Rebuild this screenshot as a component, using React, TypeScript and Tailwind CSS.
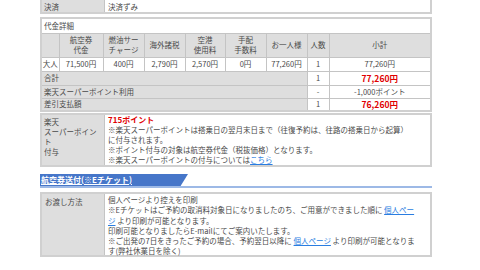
import React from "react";

const cellBase = "border border-[#c4c4c4] text-center leading-[10px] whitespace-nowrap";
const cell = cellBase + " px-[2px]";
const gray = "bg-[#dedede]";

const FareTable = () => {
  return (
    <table className="w-[392px] table-fixed border-collapse border-2 border-[#d0d0d0]">
      <colgroup>
        <col className="w-[18px]" />
        <col className="w-[44px]" />
        <col className="w-[41px]" />
        <col className="w-[41px]" />
        <col className="w-[40px]" />
        <col className="w-[41px]" />
        <col className="w-[41px]" />
        <col className="w-[22px]" />
        <col />
      </colgroup>
      <tbody>
        <tr className="h-[15px]">
          <td colSpan={9} className={cell + " text-left"}>
            代金詳細
          </td>
        </tr>
        <tr className={"h-[24px] " + gray}>
          <td className={cell}></td>
          <td className={cell}>
            航空券
            <br />
            代金
          </td>
          <td className={cell}>
            燃油サー
            <br />
            チャージ
          </td>
          <td className={cell}>海外諸税</td>
          <td className={cell}>
            空港
            <br />
            使用料
          </td>
          <td className={cell}>
            手配
            <br />
            手数料
          </td>
          <td className={cell}>お一人様</td>
          <td className={cell}>人数</td>
          <td className={cell}>小計</td>
        </tr>
        <tr className="h-[14px]">
          <td className={cellBase + " px-0 overflow-hidden"}>大人</td>
          <td className={cell}>71,500円</td>
          <td className={cell}>400円</td>
          <td className={cell}>2,790円</td>
          <td className={cell}>2,570円</td>
          <td className={cell}>0円</td>
          <td className={cell}>77,260円</td>
          <td className={cell}>1</td>
          <td className={cell}>77,260円</td>
        </tr>
        <tr className="h-[14px]">
          <td colSpan={7} className={cell + " text-left " + gray}>
            合計
          </td>
          <td className={cell}>1</td>
          <td className={cell + " font-bold text-[8.5px] text-[#e00000]"}>77,260円</td>
        </tr>
        <tr className="h-[13px]">
          <td colSpan={7} className={cell + " text-left " + gray}>
            楽天スーパーポイント利用
          </td>
          <td className={cell}>-</td>
          <td className={cell}>-1,000ポイント</td>
        </tr>
        <tr className="h-[13px]">
          <td colSpan={7} className={cell + " text-left " + gray}>
            差引支払額
          </td>
          <td className={cell}>1</td>
          <td className={cell + " font-bold text-[8.5px] text-[#e00000]"}>76,260円</td>
        </tr>
      </tbody>
    </table>
  );
};

const Link = ({ children }: { children: React.ReactNode }) => (
  <span className="text-[#2a7de1] underline">{children}</span>
);

export default function App() {
  return (
    <div className="w-[480px] h-[270px] overflow-hidden bg-white text-[#4a4a4a] text-[7.5px] font-['Noto_Sans_CJK_JP',sans-serif]">
      <div className="ml-[40px] w-[392px] -mt-[3px] flex flex-col">
        {/* 決済 */}
        <div className="flex h-[17px] border-2 border-[#d0d0d0]">
          <div className="w-[63px] bg-[#dedede] border-r border-[#c4c4c4] px-[2px] flex items-center pt-[2px]">
            決済
          </div>
          <div className="flex-1 px-[3px] flex items-center pt-[2px]">決済ずみ</div>
        </div>

        <div className="mt-[3px]">
          <FareTable />
        </div>

        {/* ポイント */}
        <div className="mt-[1px] flex border-2 border-[#d0d0d0] h-[54px]">
          <div className="w-[63px] bg-[#dedede] border-r border-[#c4c4c4] px-[2px] pt-[2px] leading-[10px]">
            楽天
            <br />
            スーパーポイン
            <br />
            ト
            <br />
            付与
          </div>
          <div className="flex-1 px-[3px] leading-[10px]">
            <div className="text-[#e00000] font-bold text-[8px] leading-[10px]">715ポイント</div>
            <div>※楽天スーパーポイントは搭乗日の翌月末日まで（往復予約は、往路の搭乗日から起算）</div>
            <div>に付与されます。</div>
            <div>※ポイント付与の対象は航空券代金（税抜価格）となります。</div>
            <div>
              ※楽天スーパーポイントの付与については<Link>こちら</Link>
            </div>
          </div>
        </div>

        {/* 見出し */}
        <div className="mt-[7px] h-[14px] flex items-end border-b-2 border-[#9db9e6]">
          <div className="h-[12px] w-[148px] bg-[#4676c9] [clip-path:polygon(0_0,100%_0,95%_100%,0_100%)] flex items-center px-[1px] text-white underline text-[8px] font-bold">
            航空券送付(※Eチケット)
          </div>
        </div>

        {/* お渡し方法 */}
        <div className="mt-[4px] flex border-2 border-[#d0d0d0] h-[65px]">
          <div className="w-[63px] bg-[#dedede] border-r border-[#c4c4c4] px-[3px] pt-[3px] leading-[10px]">
            お渡し方法
          </div>
          <div className="flex-1 px-[3px] pt-[1px] leading-[10.3px]">
            <div>個人ページより控えを印刷</div>
            <div>
              ※Eチケットはご予約の取消料対象日になりましたのち、ご用意ができました順に <Link>個人ペー</Link>
            </div>
            <div>
              <Link>ジ</Link> より印刷が可能となります。
            </div>
            <div>印刷可能となりましたらE-mailにてご案内いたします。</div>
            <div>
              ※ご出発の7日をきったご予約の場合、予約翌日以降に <Link>個人ページ</Link> より印刷が可能となりま
            </div>
            <div>す(弊社休業日を除く)</div>
          </div>
        </div>
      </div>
    </div>
  );
}
